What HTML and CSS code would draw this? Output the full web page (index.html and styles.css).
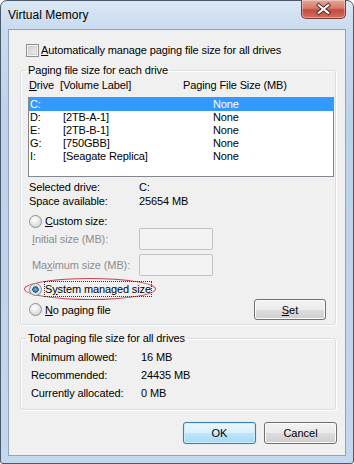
FILE: index.html
```html
<!DOCTYPE html>
<html lang="en">

<head>
    <meta charset="UTF-8">
    <title>Virtual Memory</title>
    <link rel="stylesheet" href="styles.css">
</head>

<body>
    <div class="window">
        <div class="titlebar">
            <span class="title">Virtual Memory</span>
            <button class="close">
                <svg width="45" height="19" viewBox="0 0 45 19">
                    <path d="M17.5 5 L27.5 13 M27.5 5 L17.5 13" stroke="#4a2222" stroke-width="4" stroke-linecap="square" />
                    <path d="M17.5 5 L27.5 13 M27.5 5 L17.5 13" stroke="#ffffff" stroke-width="2.2" stroke-linecap="square" />
                </svg>
            </button>
        </div>

        <div class="client">
            <div class="auto-row">
                <span class="checkbox"></span>
                <span class="label"><u>A</u>utomatically manage paging file size for all drives</span>
            </div>

            <fieldset class="group group-drives">
                <legend>Paging file size for each drive</legend>
                <div class="cols">
                    <span class="col-drive"><u>D</u>rive</span>
                    <span class="col-label">[Volume Label]</span>
                    <span>Paging File Size (MB)</span>
                </div>
                <div class="listbox">
                    <div class="row selected"><span class="c1">C:</span><span class="c2"></span><span>None</span></div>
                    <div class="row"><span class="c1">D:</span><span class="c2">[2TB-A-1]</span><span>None</span></div>
                    <div class="row"><span class="c1">E:</span><span class="c2">[2TB-B-1]</span><span>None</span></div>
                    <div class="row"><span class="c1">G:</span><span class="c2">[750GBB]</span><span>None</span></div>
                    <div class="row"><span class="c1">I:</span><span class="c2">[Seagate Replica]</span><span>None</span></div>
                </div>

                <div class="info">
                    <div class="info-row"><span class="key">Selected drive:</span><span>C:</span></div>
                    <div class="info-row"><span class="key">Space available:</span><span>25654 MB</span></div>
                </div>

                <div class="radio-row custom">
                    <span class="radio"></span>
                    <span class="label"><u>C</u>ustom size:</span>
                </div>
                <div class="size-row">
                    <span class="key disabled"><u>I</u>nitial size (MB):</span>
                    <span class="textbox"></span>
                </div>
                <div class="size-row second">
                    <span class="key disabled">Ma<u>x</u>imum size (MB):</span>
                    <span class="textbox"></span>
                </div>

                <div class="radio-row marked">
                    <span class="radio checked"></span>
                    <span class="label focus">S<u>y</u>stem managed size</span>
                </div>
                <div class="radio-row nopage">
                    <div class="radio-left">
                        <span class="radio"></span>
                        <span class="label"><u>N</u>o paging file</span>
                    </div>
                    <button class="btn set"><u>S</u>et</button>
                </div>
            </fieldset>

            <fieldset class="group group-total">
                <legend>Total paging file size for all drives</legend>
                <div class="total-row"><span class="key">Minimum allowed:</span><span>16 MB</span></div>
                <div class="total-row"><span class="key">Recommended:</span><span>24435 MB</span></div>
                <div class="total-row"><span class="key">Currently allocated:</span><span>0 MB</span></div>
            </fieldset>

            <div class="actions">
                <button class="btn default">OK</button>
                <button class="btn">Cancel</button>
            </div>
        </div>
    </div>
</body>

</html>
```

FILE: styles.css
```css
* {
    box-sizing: border-box;
}

body {
    margin: 0;
    font-family: "Liberation Sans", Arial, sans-serif;
    font-size: 11px;
    letter-spacing: -0.12px;
    color: #000;
    background: #fff;
    white-space: nowrap;
}

u {
    text-decoration: underline;
    text-underline-offset: 1px;
}

.window {
    width: 354px;
    height: 464px;
    border: 1px solid #4b5a6b;
    border-radius: 7px 7px 3px 3px;
    padding: 0 7px 7px;
    background: linear-gradient(180deg, #dce8f5 0px, #c9dbef 28px, #bcd2ea 120px, #c3d7ed 464px);
    display: flex;
    flex-direction: column;
}

.titlebar {
    height: 28px;
    display: flex;
    justify-content: space-between;
    align-items: flex-start;
}

.title {
    padding-top: 6px;
    line-height: 16px;
    font-size: 12px;
    letter-spacing: 0;
}

.close {
    width: 45px;
    height: 19px;
    margin-top: -1px;
    padding: 0;
    border: 1px solid #7a3a36;
    border-top: none;
    border-radius: 0 0 5px 5px;
    background: linear-gradient(180deg, #e7a698 0%, #d67b6c 45%, #c54a3c 55%, #d0705f 100%);
    box-shadow: inset 0 0 0 1px rgba(255, 255, 255, 0.35);
    display: flex;
}

.client {
    height: 427px;
    border: 1px solid #8fa3ba;
    background: #f0f0f0;
    padding: 0 9px 0 11px;
}

/* Checkbox row */
.auto-row {
    margin: 12px 0 0 6px;
    height: 16px;
    display: flex;
    align-items: center;
}

.checkbox {
    width: 13px;
    height: 13px;
    border: 1px solid #8e8f8f;
    background: linear-gradient(135deg, #cbcbcb, #f4f4f4);
    box-shadow: inset 0 0 0 1px #f4f4f4, inset 0 0 0 2px #d2d2d2;
}

.auto-row .label {
    margin-left: 2px;
    line-height: 16px;
}

/* Group boxes */
.group {
    margin: 4px 0 0;
    padding: 0;
    min-width: 0;
    border: 1px solid #d5dfe5;
    border-radius: 3px;
    box-shadow: inset 1px 1px 0 #fff, 1px 1px 0 #fff;
}

.group legend {
    margin-left: 5px;
    padding: 0 2px;
    line-height: 16px;
}

.cols {
    margin-left: 8px;
    height: 15px;
    line-height: 15px;
    display: flex;
}

.col-drive {
    width: 31px;
}

.col-label {
    width: 123px;
}

.listbox {
    margin: 4px 0 0 7px;
    width: 306px;
    height: 80px;
    border: 1px solid #828790;
    background: #fff;
}

.row {
    height: 13px;
    line-height: 13px;
    padding-left: 1px;
    display: flex;
}

.row.selected {
    background: #3399ff;
    color: #fff;
}

.c1 {
    width: 33px;
}

.c2 {
    width: 150px;
}

.info {
    margin: 3px 0 0 8px;
}

.info-row {
    height: 14px;
    line-height: 14px;
    display: flex;
}

.info-row .key {
    width: 110px;
}

/* Radios */
.radio-row {
    display: flex;
    align-items: center;
}

.radio {
    width: 13px;
    height: 13px;
    border-radius: 50%;
    border: 1px solid #8e8f8f;
    background: radial-gradient(circle at 40% 35%, #ffffff 0%, #e8e8e8 45%, #c9c9c9 100%);
    flex: none;
}

.radio.checked {
    background: radial-gradient(circle at 50% 50%, #7fb9e8 0%, #2a74b8 28%, #1c4f82 38%, #e6e6e6 44%, #d4d4d4 100%);
}

.radio-row .label {
    margin-left: 3px;
    line-height: 14px;
}

.custom {
    margin: 6px 0 0 8px;
    height: 14px;
}

.size-row {
    margin-left: 11px;
    height: 22px;
    display: flex;
    align-items: center;
}

.size-row.second {
    margin-top: 4px;
}

.size-row .key {
    width: 107px;
}

.disabled {
    color: #8d8d8d;
}

.textbox {
    width: 74px;
    height: 22px;
    border: 1px solid #c2c2c2;
    border-radius: 2px;
    background: #f3f3f3;
}

.marked {
    margin: 2px 0 0 3px;
    width: 132px;
    height: 22px;
    padding-left: 4px;
    border: 1px solid #c8434b;
    border-radius: 50% / 50%;
}

.focus {
    outline: 1px dotted #333;
    outline-offset: 0;
}

.nopage {
    margin: -1px 0 0 8px;
    height: 21px;
    justify-content: space-between;
}

.radio-left {
    display: flex;
    align-items: center;
}

/* Buttons */
.btn {
    height: 21px;
    padding: 0;
    font-family: inherit;
    font-size: 11px;
    color: #000;
    border: 1px solid #707070;
    border-radius: 3px;
    background: linear-gradient(180deg, #f2f2f2 0%, #ebebeb 50%, #dddddd 51%, #cfcfcf 100%);
    box-shadow: inset 0 0 0 1px #fcfcfc;
}

.set {
    width: 72px;
    margin-right: 9px;
}

.group-drives {
    padding-bottom: 4px;
}

.group-total {
    margin-top: 5px;
    padding: 2px 0 7px;
}

.total-row {
    margin-left: 10px;
    height: 18px;
    line-height: 18px;
    display: flex;
}

.total-row .key {
    width: 110px;
}

.actions {
    margin: 12px -1px 0 0;
    display: flex;
    justify-content: flex-end;
    gap: 8px;
}

.actions .btn {
    width: 73px;
    height: 22px;
}

.btn.default {
    border-color: #3c7fb1;
    background: linear-gradient(180deg, #eaf6fd 0%, #d9f0fc 50%, #bee6fd 51%, #a7d9f5 100%);
    box-shadow: inset 0 0 0 1px #cdeaf9, 0 0 1px #6ab4e5;
}
```
